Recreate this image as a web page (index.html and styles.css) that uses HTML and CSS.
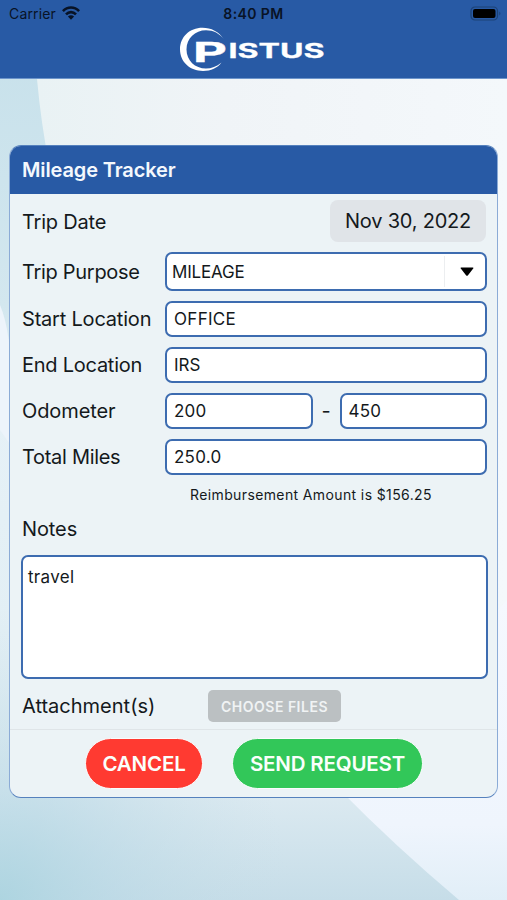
FILE: index.html
```html
<!DOCTYPE html>
<html lang="en">
<head>
<meta charset="utf-8">
<title>Mileage Tracker</title>
<link rel="stylesheet" href="styles.css">
</head>
<body>
<div class="screen">
  <svg class="backdrop" viewBox="0 0 507 900" preserveAspectRatio="none" aria-hidden="true">
    <defs>
      <linearGradient id="sweep" x1="0" y1="0" x2="0" y2="1">
        <stop offset="0" stop-color="#c6e0ea"/>
        <stop offset=".2" stop-color="#cde4ed"/>
        <stop offset=".34" stop-color="#d3e7ef"/>
        <stop offset=".45" stop-color="#e6f1f7"/>
        <stop offset=".7" stop-color="#e2eff5"/>
        <stop offset=".88" stop-color="#dceaf1"/>
        <stop offset="1" stop-color="#c6dde8"/>
      </linearGradient>
      <radialGradient id="edge" gradientUnits="userSpaceOnUse" cx="0" cy="900" r="290">
        <stop offset="0" stop-color="#a9d3df" stop-opacity=".85"/>
        <stop offset=".4" stop-color="#b8d8e5" stop-opacity=".55"/>
        <stop offset="1" stop-color="#c8dfe8" stop-opacity="0"/>
      </radialGradient>
      <linearGradient id="light" x1="0" y1="0" x2="1" y2="0">
        <stop offset="0" stop-color="#e9f2f4"/>
        <stop offset=".4" stop-color="#f0f4f7"/>
        <stop offset="1" stop-color="#f4f8fb"/>
      </linearGradient>
      <linearGradient id="corner" x1="0" y1="0" x2="0" y2="1">
        <stop offset="0" stop-color="#f5f8fe"/>
        <stop offset=".75" stop-color="#eff5fd"/>
        <stop offset="1" stop-color="#e1eef7"/>
      </linearGradient>
    </defs>
    <rect width="507" height="900" fill="url(#sweep)"/>
    <rect y="600" width="300" height="300" fill="url(#edge)"/>
    <path d="M37 79 Q46 180 80 280 Q180 640 347 797 H507 V79Z" fill="url(#light)"/>
    <path d="M340 790 Q395 846 459 900 H507 V600Z" fill="url(#corner)"/>
    <path d="M0 305 Q11 330 14 400 V450 L0 430Z" fill="#edf4fb"/>
  </svg>

  <header class="topbar">
    <div class="status">
      <span class="carrier">Carrier
        <svg class="wifi" viewBox="0 0 18 14" aria-hidden="true">
          <g fill="none" stroke="#081326" stroke-width="2.6">
            <path d="M.9 5.2 C5.5 .2 12.5 .2 17.1 5.2"/>
            <path d="M4 8.4 C7 5.3 11 5.3 14 8.4"/>
          </g>
          <path d="M9 13.7 L5.9 10.5 Q9 8 12.1 10.5Z" fill="#081326"/>
        </svg>
      </span>
      <span class="clock">8:40 PM</span>
      <svg class="battery" viewBox="0 0 32 15" aria-hidden="true">
        <rect x="1" y="1" width="26.5" height="13" rx="4" fill="none" stroke="#1c4276" stroke-width="1.2"/>
        <rect x="3" y="3" width="22.5" height="9" rx="2" fill="#000"/>
        <path d="M29.3 5.5 Q31.5 7.5 29.3 9.5Z" fill="#1c4276"/>
      </svg>
    </div>
    <svg class="logo" viewBox="0 0 148 46" role="img" aria-label="Pistus">
      <path d="M45 12.500 C40 4.500 32 .7 23.500 .7 C10.500 .7 1 10 1 22.300 C1 35 11 44 24 44 C32 44 38.500 41 42.500 35.500 C37.500 39.800 32.500 41.500 27 41.500 C16 41.500 7.500 33.500 7.500 22.500 C7.500 11.500 16 3.300 27 3.300 C34.500 3.300 40.500 6.500 45 12.500Z" fill="#fff"/>
      <g class="logo-text">
        <text class="logo-big" x="14" y="34.700" textLength="34" lengthAdjust="spacingAndGlyphs">P</text>
        <text class="logo-small" x="49.500" y="31" textLength="96" lengthAdjust="spacingAndGlyphs">ISTUS</text>
      </g>
    </svg>
  </header>

  <main class="card">
    <h1 class="card-title">Mileage Tracker</h1>
    <div class="fields">
      <div class="row row-date"><span class="label l-date">Trip Date</span><span class="date">Nov 30, 2022</span></div>
      <div class="row row-select"><span class="label l-purpose">Trip Purpose</span>
        <div class="box select"><span>MILEAGE</span><span class="arrow"><svg viewBox="0 0 14 9" aria-hidden="true"><path d="M1.200.5H12.800Q14 .6 13.200 1.600L8 8.200Q7 9.200 6 8.200L.8 1.600Q0 .6 1.200.5Z"/></svg></span></div>
      </div>
      <div class="row"><span class="label l-start">Start Location</span><div class="box office">OFFICE</div></div>
      <div class="row"><span class="label l-end">End Location</span><div class="box">IRS</div></div>
      <div class="row"><span class="label l-odo">Odometer</span><div class="box digits">200</div><span class="dash">-</span><div class="box digits">450</div></div>
      <div class="row"><span class="label l-total">Total Miles</span><div class="box digits">250.0</div></div>
    </div>
    <p class="reimburse">Reimbursement Amount is $156.25</p>
    <p class="label notes-label">Notes</p>
    <div class="box notes">travel</div>
    <div class="attach"><span class="label l-attach">Attachment(s)</span><span class="choose">CHOOSE FILES</span></div>
    <footer class="actions"><span class="btn cancel">CANCEL</span><span class="btn send">SEND REQUEST</span></footer>
  </main>
</div>
</body>
</html>
```
FILE: styles.css
```css
* { box-sizing: border-box; }
body { margin: 0; font-family: Inter, "Liberation Sans", sans-serif; color: #14191c; }
.screen { position: relative; width: 507px; height: 900px; overflow: hidden; isolation: isolate; }
.backdrop { position: absolute; inset: 0; width: 507px; height: 900px; z-index: -1; }

.topbar { height: 79px; background: #285aa5; border-bottom: 1px solid #6d95cb; }
.status { display: grid; grid-template-columns: 1fr auto 1fr; align-items: center; height: 27px; padding: 0 6px 0 9px; color: #081326; }
.carrier { display: flex; align-items: center; gap: 6px; font-size: 14px; letter-spacing: .15px; }
.wifi { width: 18px; height: 14px; margin-top: -1px; }
.clock { margin-left: -3px; font-size: 14px; font-weight: 600; letter-spacing: .4px; }
.battery { width: 32px; height: 15px; margin-right: -1px; justify-self: end; }
.logo { display: block; width: 148px; height: 46px; margin: 0 0 0 179px; }
.logo-text { fill: #fff; stroke: #fff; stroke-width: .3; font-weight: 700; }
.logo-big { font-size: 27px; }
.logo-small { font-size: 19.500px; }

.card { width: 489px; height: 653px; margin: 66px 0 0 9px; background: #ecf3f6; border: 1px solid #5581bd; border-left-color: #8babd6; border-right-color: #8babd6; border-radius: 12px; overflow: hidden; }
.card-title { height: 48px; margin: 0; padding: 0 0 0 12px; line-height: 49px; font-size: 20px; font-weight: 600; letter-spacing: -.13px; color: #f4f8fd; background: #285aa5; }
.fields { display: flex; flex-direction: column; gap: 10px; padding: 6px 10px 0 12px; }
.row { display: flex; align-items: stretch; height: 36px; }
.row-date { height: 42px; justify-content: space-between; }
.row-select { height: 39px; }
.label { display: flex; align-items: center; width: 143px; font-size: 20px; letter-spacing: -.2px; white-space: nowrap; }
.l-date { padding-top: 1px; }
.l-purpose { letter-spacing: -.3px; }
.l-end { letter-spacing: -.25px; }
.l-odo { letter-spacing: -.1px; }
.l-total { letter-spacing: -.3px; }
.l-attach { letter-spacing: 0; }
.date { display: flex; align-items: center; justify-content: center; width: 156px; margin-right: 1px; border-radius: 8px; background: #e0e4e8; font-size: 20px; letter-spacing: -.2px; white-space: nowrap; }
.box { display: flex; align-items: center; flex: 1; padding-left: 7px; background: #fff; border: 2px solid #3d6cb0; border-radius: 7px; font-size: 17px; }
.office { letter-spacing: .3px; }
.digits { letter-spacing: .25px; }
.select { padding-left: 5px; justify-content: space-between; letter-spacing: -.2px; }
.arrow { display: flex; align-items: center; justify-content: center; width: 41px; align-self: stretch; margin: 2px 0; border-left: 1px solid #eceef0; }
.arrow svg { width: 14px; height: 9px; margin-left: 3px; }
.dash { width: 27px; text-align: center; line-height: 36px; font-size: 20px; }
.reimburse { margin: 10px 0 0 180px; height: 20px; line-height: 20px; font-size: 14px; letter-spacing: .38px; white-space: nowrap; }
.notes-label { height: 28px; margin: 10px 0 0 12px; letter-spacing: -.1px; }
.notes { width: 467px; height: 124px; margin: 12px 0 0 11px; padding: 10px 5px; align-items: flex-start; line-height: 20px; letter-spacing: .3px; }
.attach { display: flex; align-items: center; height: 51px; padding: 4px 0 0 12px; border-bottom: 1px solid #dfe5e8; }
.choose { display: flex; align-items: center; justify-content: center; width: 133px; height: 32px; margin-left: 43px; border-radius: 5px; background: #bbc0c2; color: #f0f3f4; font-size: 14px; font-weight: 600; letter-spacing: .5px; }
.actions { display: flex; gap: 29px; padding: 8px 0 0 75px; }
.btn { display: flex; align-items: center; justify-content: center; height: 51px; border: 1px solid #fafcfd; border-radius: 26px; color: #fafffb; font-size: 20.500px; font-weight: 600; letter-spacing: -.18px; white-space: nowrap; }
.cancel { width: 118px; background: #ff3a31; }
.send { width: 191px; background: #32c759; }
```
